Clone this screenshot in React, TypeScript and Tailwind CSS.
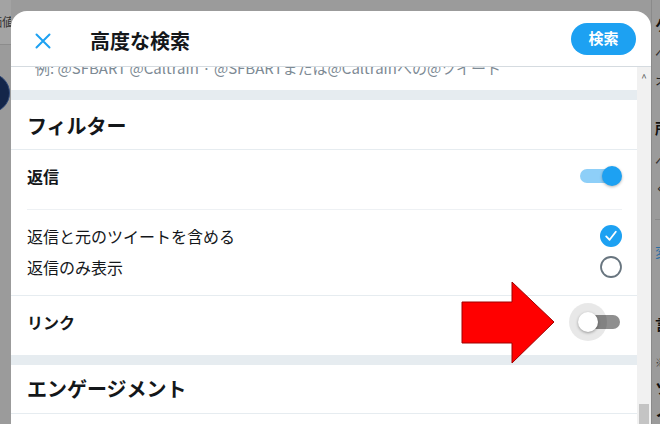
import React from "react";

const jp = { fontFamily: '"Noto Sans CJK JP", "Noto Sans", sans-serif' };

function ToggleOn() {
  return (
    <div className="relative w-[44px] h-[20px] flex items-center">
      <div className="w-[40px] ml-[2px] h-[14px] rounded-full bg-[#8ecff8]" />
      <div className="absolute right-0 top-0 w-[20px] h-[20px] rounded-full bg-[#1da1f2] shadow-[0_1px_3px_rgba(0,0,0,0.3)]" />
    </div>
  );
}

function ToggleOff() {
  return (
    <div className="relative w-[44px] h-[20px] flex items-center">
      <div className="w-[40px] ml-[2px] h-[14px] rounded-full bg-[#8f8f8f]" />
      <div className="absolute left-[-9px] top-[-9px] w-[38px] h-[38px] rounded-full bg-[rgba(0,0,0,0.09)]" />
      <div className="absolute left-0 top-0 w-[20px] h-[20px] rounded-full bg-white shadow-[0_1px_3px_rgba(0,0,0,0.35)]" />
    </div>
  );
}

function Checked() {
  return (
    <svg width="22" height="22" viewBox="0 0 22 22">
      <circle cx="11" cy="11" r="11" fill="#1da1f2" />
      <path d="M6.2 11.4 L9.6 14.8 L15.8 6.8" fill="none" stroke="white" strokeWidth="1.8" strokeLinecap="round" strokeLinejoin="round" />
    </svg>
  );
}

function Unchecked() {
  return (
    <svg width="22" height="22" viewBox="0 0 22 22">
      <circle cx="11" cy="11" r="10" fill="white" stroke="#68757f" strokeWidth="1.8" />
    </svg>
  );
}

export default function App() {
  return (
    <div className="relative w-[660px] h-[424px] overflow-hidden bg-[#9b9b9b]" style={jp}>
      <div className="flex h-full">
        {/* left background strip */}
        <div className="w-[11px] shrink-0 flex flex-col overflow-hidden">
          <div className="h-[45px] bg-[#a3a3a3] border-b border-[#8c8c8c] flex items-center">
            <span className="text-[12px] text-[#333] whitespace-nowrap -ml-[10px]">価値</span>
          </div>
          <div className="mt-[28px] -ml-[30px] w-[40px] h-[40px] rounded-full bg-[#14264a] border border-[#304a7a]" />
        </div>

        {/* modal */}
        <div className="w-[640px] shrink-0 mt-[11px] bg-white rounded-t-[16px] flex flex-col">
          <div className="h-[56px] shrink-0 border-b border-[#d5dbe0] flex items-center pl-[24px] pr-[15px]">
            <svg width="16" height="16" viewBox="0 0 16 16" className="mt-[4px]">
              <path d="M1.5 1.5 L14.5 14.5 M14.5 1.5 L1.5 14.5" stroke="#1da1f2" strokeWidth="2" strokeLinecap="round" />
            </svg>
            <div className="ml-[39px] mt-[4px] text-[20px] font-bold text-[#14171a] leading-none">高度な検索</div>
            <div className="ml-auto w-[65px] h-[32px] rounded-full bg-[#1da1f2] flex items-center justify-center text-white text-[15px] font-bold">
              検索
            </div>
          </div>

          <div className="flex flex-1">
            <div className="w-[626px] shrink-0 flex flex-col">
              <div className="h-[23px] overflow-hidden pl-[24px]">
                <div className="-mt-[9px] text-[15px] leading-[20px] text-[#7d8a94] whitespace-nowrap">
                  例: @SFBART @Caltrain · @SFBARTまたは@Caltrainへの@ツイート
                </div>
              </div>
              <div className="h-[10px] bg-[#e6ecf0]" />
              <div className="h-[50px] border-b border-[#e6ecf0] flex items-center pl-4 pt-[2px] text-[20px] font-bold text-[#14171a]">
                フィルター
              </div>
              <div className="h-[59px] pb-[8px] flex items-center justify-between pl-4 pr-[15px]">
                <span className="text-[16px] font-bold text-[#14171a]">返信</span>
                <ToggleOn />
              </div>
              <div className="h-px bg-[#eef1f4] ml-4 mr-[15px]" />
              <div className="pt-[10px] pb-[13px] border-b border-[#e6ecf0] flex flex-col">
                <div className="h-[31px] flex items-center justify-between pl-4 pr-[15px]">
                  <span className="text-[16px] text-[#14171a]">返信と元のツイートを含める</span>
                  <Checked />
                </div>
                <div className="h-[31px] flex items-center justify-between pl-4 pr-[15px]">
                  <span className="text-[16px] text-[#14171a]">返信のみ表示</span>
                  <Unchecked />
                </div>
              </div>
              <div className="h-[59px] pb-[7px] flex items-center justify-between pl-4 pr-[15px]">
                <span className="text-[16px] font-bold text-[#14171a]">リンク</span>
                <ToggleOff />
              </div>
              <div className="h-[10px] bg-[#e6ecf0]" />
              <div className="h-[49px] border-b border-[#e6ecf0] flex items-center pl-4 text-[20px] font-bold text-[#14171a]">
                エンゲージメント
              </div>
              <div className="flex-1" />
            </div>
            {/* scrollbar */}
            <div className="w-[14px] shrink-0 bg-[#f1f1f1] flex flex-col items-center">
              <span className="text-[10px] leading-none text-[#505050] mt-[6px]">^</span>
              <div className="mt-auto w-[10px] h-[20px] bg-[#c4c4c4] mb-0" />
            </div>
          </div>
        </div>

        {/* right background strip */}
        <div className="flex-1 overflow-hidden border-l border-[#8a8a8a] flex flex-col pl-[3px] text-[#111] whitespace-nowrap">
          <div className="mt-[16px] text-[15px] font-bold leading-[18px]">ケア</div>
          <div className="mt-[9px] text-[14px] leading-[18px] text-[#333]">ベト</div>
          <div className="mt-[10px] text-[14px] leading-[18px] text-[#222]">オリ</div>
          <div className="mt-[30px] text-[15px] font-bold leading-[18px]">所有</div>
          <div className="mt-[14px] text-[14px] leading-[18px] text-[#333]">ベト</div>
          <div className="mt-[10px] text-[14px] leading-[18px] text-[#333]">くい</div>
          <div className="mt-[22px] h-px bg-[#8a8a8a]" />
          <div className="mt-[22px] text-[14px] leading-[18px] text-[#2a6fa3]">変更</div>
          <div className="mt-[55px] text-[15px] font-bold leading-[18px]">言語</div>
          <div className="mt-[22px] text-[11px] leading-[14px] text-[#444]">※注</div>
          <div className="mt-[10px] text-[15px] font-bold leading-[18px]">ソフ</div>
          <div className="mt-[4px] text-[15px] font-bold leading-[18px]">ノン</div>
        </div>
      </div>

      {/* red arrow overlay */}
      <svg className="absolute left-0 top-0 pointer-events-none" width="660" height="424" viewBox="0 0 660 424">
        <polygon
          points="462,302 512,302 512,282 554,322 512,363 512,343 462,343"
          fill="#ff0000"
          stroke="#a00000"
          strokeWidth="1"
        />
      </svg>
    </div>
  );
}
